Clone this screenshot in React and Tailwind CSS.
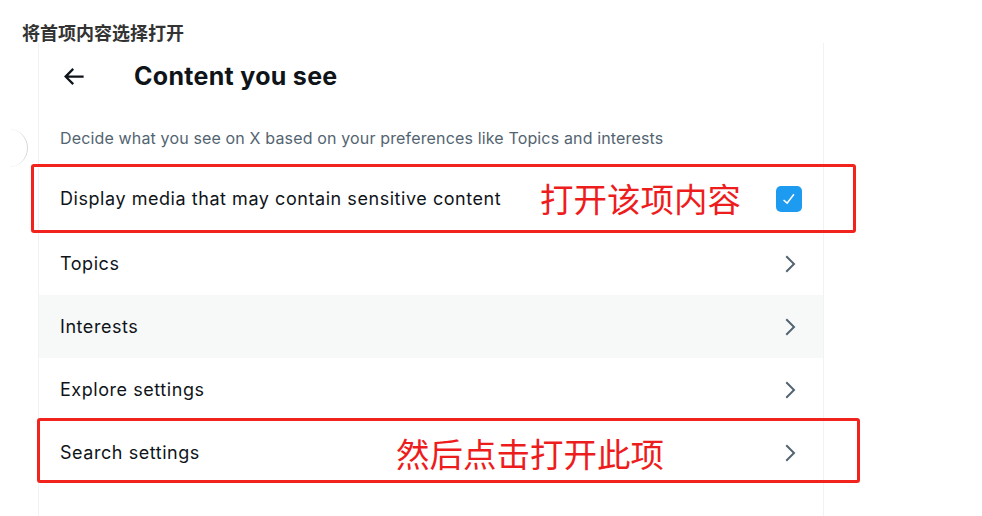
import React from 'react';

const ink = 'text-[#0f1419]';

function Chevron() {
  return (
    <svg viewBox="0 0 24 24" className="w-6 h-6 fill-[#536471]">
      <path d="M14.586 12L7.543 4.96l1.414-1.42L17.414 12l-8.457 8.46-1.414-1.42L14.586 12z" />
    </svg>
  );
}

function Row({ label, shaded, tall, children }) {
  return (
    <div className={`flex items-center justify-between pl-[21px] pr-[21px] ${tall ? 'h-[67px]' : 'h-[63px]'} ${shaded ? 'bg-[#f7f9f9]' : ''}`}>
      <span className={`text-[18px] tracking-[0.55px] ${ink}`}>{label}</span>
      {children || <Chevron />}
    </div>
  );
}

export default function App() {
  return (
    <div className="relative h-[516px] w-[982px] overflow-hidden bg-white font-['Inter','Noto_Sans_CJK_SC',sans-serif]">
      <div className="h-[43px] pl-[22px] pt-[19px] text-[18px] font-bold leading-[26px] text-[#333] font-['Noto_Sans_CJK_SC',sans-serif]">
        将首项内容选择打开
      </div>

      {/* stray arc at the left edge */}
      <div className="absolute left-[-10px] top-[129px] h-[38px] w-[38px] rounded-full border-r-[1.5px] border-[#d3d8db]" />

      <div className="ml-[38px] h-[473px] w-[786px] border-x border-[#eff3f4]">
        <div className="flex h-[67px] items-center gap-[47px] pl-[21px]">
          <svg viewBox="0 0 24 24" className="h-[27px] w-[27px] fill-[#0f1419]">
            <path d="M7.414 13l5.043 5.04-1.414 1.42L3.586 12l7.457-7.46 1.414 1.42L7.414 11H21v2H7.414z" />
          </svg>
          <h1 className={`text-[25px] font-bold tracking-[0.3px] ${ink}`}>Content you see</h1>
        </div>
        <div className="flex h-[55px] items-center pl-[21px] text-[16px] tracking-[0.15px] text-[#536471]">
          Decide what you see on X based on your preferences like Topics and interests
        </div>
        <Row label="Display media that may contain sensitive content" tall>
          <div className="flex h-[26px] w-[26px] items-center justify-center rounded-[5px] bg-[#1d9bf0]">
            <svg viewBox="0 0 24 24" className="h-[18px] w-[18px] fill-white">
              <path d="M9.64 18.952l-5.55-4.861 1.317-1.504 3.951 3.459 8.459-10.948L19.4 6.32 9.64 18.952z" />
            </svg>
          </div>
        </Row>
        <Row label="Topics" />
        <Row label="Interests" shaded />
        <Row label="Explore settings" />
        <Row label="Search settings" />
      </div>

      {/* annotations drawn over the screenshot */}
      <div className="absolute left-[31px] top-[164px] h-[69px] w-[825px] rounded-[3px] border-[3px] border-[#f2231d]" />
      <div className="absolute left-[540px] top-[176px] text-[33.5px] leading-[44px] text-[#ee1d1d] font-['Noto_Sans_CJK_SC',sans-serif]">
        打开该项内容
      </div>
      <div className="absolute left-[37px] top-[418px] h-[65px] w-[823px] rounded-[3px] border-[3px] border-[#f2231d]" />
      <div className="absolute left-[396px] top-[431px] text-[33.5px] leading-[44px] text-[#ee1d1d] font-['Noto_Sans_CJK_SC',sans-serif]">
        然后点击打开此项
      </div>
    </div>
  );
}
